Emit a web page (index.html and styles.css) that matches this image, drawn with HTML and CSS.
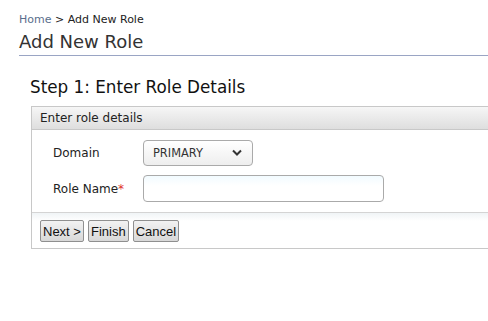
FILE: index.html
```html
<!DOCTYPE html>
<html>
<head>
<meta charset="utf-8">
<link rel="stylesheet" href="styles.css">
</head>
<body>
<div class="page">
  <div class="breadcrumb"><a class="crumb-link">Home</a> &gt; Add New Role</div>
  <h1 class="page-title">Add New Role</h1>
  <div class="content">
    <h2 class="step-title">Step 1: Enter Role Details</h2>
    <div class="panel">
      <div class="panel-head">Enter role details</div>
      <div class="panel-body">
        <div class="row">
          <label class="label">Domain</label>
          <div class="select">
            <span>PRIMARY</span>
            <svg class="chev" width="12" height="8" viewBox="0 0 12 8"><path d="M2 1.5 L6 5.5 L10 1.5" fill="none" stroke="#333" stroke-width="2"/></svg>
          </div>
        </div>
        <div class="row">
          <label class="label">Role Name<span class="req">*</span></label>
          <input class="text-input" type="text">
        </div>
      </div>
      <div class="panel-foot">
        <button class="btn">Next &gt;</button>
        <button class="btn">Finish</button>
        <button class="btn">Cancel</button>
      </div>
    </div>
  </div>
</div>
</body>
</html>
```
FILE: styles.css
```css
html, body { margin: 0; padding: 0; background: #fff; }
body { font-family: "DejaVu Sans", sans-serif; color: #222; }
.page { padding: 13px 0 0 19px; }
.breadcrumb { font-size: 11px; line-height: 14px; color: #222; }
.crumb-link { color: #5a6e8c; }
.page-title {
  margin: 4px 0 0;
  font-size: 18px; font-weight: normal; color: #333;
  line-height: 22px; padding-bottom: 2px;
  border-bottom: 1px solid #9aa5c4;
}
.content { padding: 20px 0 0 11px; }
.step-title { margin: 0 0 8px; font-size: 16.8px; font-weight: normal; color: #111; line-height: 22px; }
.panel { border: 1px solid #c8c8c8; border-right: none; margin-left: 1px; }
.panel-head {
  height: 23px; line-height: 22px; padding-left: 8px;
  font-size: 12px; color: #222;
  background: linear-gradient(#f6f6f6, #dedede);
  border-bottom: 1px solid #c8c8c8;
  box-sizing: border-box;
}
.panel-body { padding: 10px 0 10px 21px; display: flex; flex-direction: column; gap: 9px; }
.row { display: flex; align-items: center; }
.label { width: 90px; font-size: 12px; color: #222; }
.req { color: #e0322a; }
.select {
  width: 110px; height: 26px; box-sizing: border-box;
  border: 1px solid #aaa; border-radius: 4px;
  background: linear-gradient(#fff, #eee);
  display: flex; align-items: center; justify-content: space-between;
  padding: 0 9px 0 9px; font-size: 11.4px; color: #333;
}
.chev { display: block; }
.text-input {
  width: 241px; height: 27px; box-sizing: border-box;
  border: 1px solid #aaa; border-radius: 4px; margin: 0;
  background: linear-gradient(#f2fbff, #fff 40%);
}
.panel-foot {
  border-top: 1px solid #d4d4d4;
  background: linear-gradient(#f0f4f6, #fff 8px);
  padding: 7px 0 6px 8px; display: flex; gap: 4px;
}
.btn {
  font-family: "Liberation Sans", sans-serif; font-size: 13px; color: #111;
  height: 22px; padding: 0 2px; margin: 0;
  border: 1px solid #8f8f8f; border-radius: 2px;
  background: linear-gradient(#f2f2f2, #d8d8d8);
}
```
